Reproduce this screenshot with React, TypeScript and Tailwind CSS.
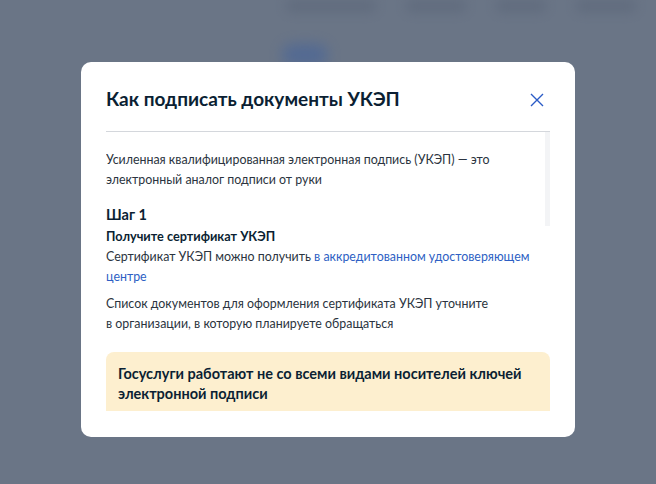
import React from 'react';

function App() {
  return (
    <div className="relative h-[484px] w-full overflow-hidden bg-[#6a7586] font-['Lato',sans-serif]">
      {/* blurred page behind the overlay */}
      <div className="absolute inset-x-0 top-0 flex justify-end gap-[30px] pr-[20px] blur-[6px] opacity-60">
        <div className="h-[12px] w-[90px] rounded bg-[#5a6578]" />
        <div className="h-[12px] w-[60px] rounded bg-[#5a6578]" />
        <div className="h-[12px] w-[50px] rounded bg-[#5a6578]" />
        <div className="h-[12px] w-[60px] rounded bg-[#5a6578]" />
      </div>
      <div className="absolute left-[282px] top-[44px] h-[22px] w-[46px] rounded-full bg-[#4d6796] blur-[7px] opacity-80" />

      <div className="relative z-10 pt-[62px]">
        <div className="mx-auto flex h-[375px] w-[494px] flex-col rounded-[10px] bg-white px-[25px] pb-[26px] pt-[24px]">
          {/* header */}
          <div className="flex items-start justify-between border-b border-[#d4d7dc] pb-[19px]">
            <h2 className="text-[19px] font-bold leading-[26px] text-[#0b1f33]">Как подписать документы УКЭП</h2>
            <button className="mr-[6px] mt-[7px] text-[#2a5bc6]">
              <svg width="14" height="14" viewBox="0 0 14 14" fill="none" stroke="currentColor" strokeWidth="1.4">
                <path d="M1 1L13 13M13 1L1 13" />
              </svg>
            </button>
          </div>

          {/* scrollable content */}
          <div className="relative min-h-0 flex-1 overflow-hidden">
            <div className="absolute right-0 top-0 h-[94px] w-[5px] bg-[#f3f4f6]" />
            <div className="pt-[18px] text-[12.4px] leading-[19.5px] text-[#2b3440]">
              <p className="pr-[40px]">
                Усиленная квалифицированная электронная подпись (УКЭП) — это электронный аналог подписи от руки
              </p>
              <h3 className="mt-[15px] text-[14.5px] font-bold leading-[22px] text-[#0b1f33]">Шаг 1</h3>
              <p className="text-[12.7px] font-bold leading-[20px] text-[#0b1f33]">Получите сертификат УКЭП</p>
              <p className="mt-[1px] pr-[10px]">
                Сертификат УКЭП можно получить{' '}
                <a className="text-[#2e5fc4]">в аккредитованном удостоверяющем центре</a>
              </p>
              <p className="mt-[8px]">
                Список документов для оформления сертификата УКЭП уточните
                <br />
                в организации, в которую планируете обращаться
              </p>
              <div className="mt-[19px] rounded-t-[8px] bg-[#fdefcf] px-[12px] pb-[20px] pt-[12px]">
                <p className="text-[14.5px] font-bold leading-[19.5px] text-[#0b1f33]">
                  Госуслуги работают не со всеми видами носителей ключей электронной подписи
                </p>
              </div>
            </div>
          </div>
        </div>
      </div>
    </div>
  );
}

export default App;
